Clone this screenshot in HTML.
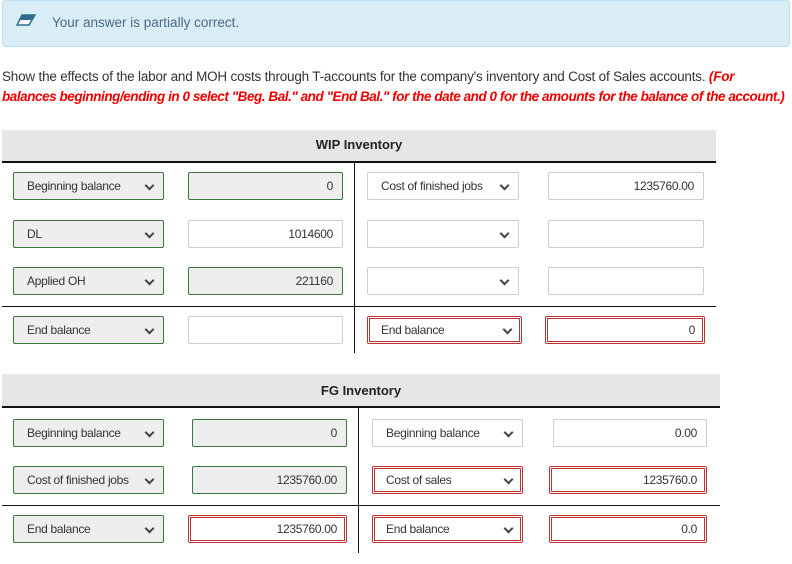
<!DOCTYPE html>
<html><head><meta charset="utf-8"><style>
body{margin:0;width:792px;height:564px;background:#fff;font-family:"Liberation Sans",sans-serif;position:relative;overflow:hidden;color:#333}
.a{position:absolute;box-sizing:border-box}
.banner{left:2px;top:0;width:788px;height:47px;background:#d9edf7;border:1px solid #bcdff1;border-radius:3px}
.hdr{background:#e6e6e6;border-bottom:2px solid #111;font-weight:bold;font-size:13px;text-align:center;color:#222}
.s,.i{height:28px;font-size:12px;line-height:26px;border:1px solid #ccc;background:#fff;border-radius:2px;color:#333;letter-spacing:-0.3px}
.s{padding-left:13px}
.i{text-align:right;padding-right:9px}
.g{border:1px solid #3c763d;background:#eee}
.r{border:3px double #b33;line-height:22px}
.s:after{content:"";position:absolute;right:10px;top:9px;width:5px;height:5px;border-right:2px solid #444;border-bottom:2px solid #444;transform:rotate(45deg)}
.r.s:after{right:8px;top:7px}
.r.s{padding-left:11px}.r.i{padding-right:7px}
.vl{background:#111;width:1px}.hl{background:#111;height:1px}
</style></head><body>
<div class="a banner"></div>
<svg class="a" style="left:16px;top:14px" width="20" height="12" viewBox="0 0 20 12"><path d="M6 1h13l-6 10H1z" fill="#fff" stroke="#2e6b8f" stroke-width="1.5"/><path d="M6 1h13l-3 5H3z" fill="#2e6b8f"/></svg>
<div class="a" style="left:52px;top:15px;font-size:13.5px;color:#4a6a80">Your answer is partially correct.</div>
<div class="a" style="left:2px;top:69px;font-size:13.5px;color:#333;white-space:nowrap;letter-spacing:-0.2px">Show the effects of the labor and MOH costs through T-accounts for the company's inventory and Cost of Sales accounts. <b style="color:#e00;font-style:italic">(For</b></div>
<div class="a" style="left:2px;top:89px;font-size:13.5px;color:#e00;font-weight:bold;font-style:italic;white-space:nowrap;letter-spacing:-0.45px">balances beginning/ending in 0 select "Beg. Bal." and "End Bal." for the date and 0 for the amounts for the balance of the account.)</div>

<div class="a hdr" style="left:2px;top:130px;width:714px;height:33px;line-height:30px">WIP Inventory</div>
<div class="a vl" style="left:354px;top:163px;height:190px"></div>
<div class="a hl" style="left:2px;top:306px;width:714px"></div>

<div class="a s g" style="left:13px;top:172px;width:151px">Beginning balance</div>
<div class="a i g" style="left:188px;top:172px;width:155px">0</div>
<div class="a s" style="left:367px;top:172px;width:152px">Cost of finished jobs</div>
<div class="a i" style="left:548px;top:172px;width:156px">1235760.00</div>

<div class="a s g" style="left:13px;top:220px;width:151px">DL</div>
<div class="a i" style="left:188px;top:220px;width:155px">1014600</div>
<div class="a s" style="left:367px;top:220px;width:152px"></div>
<div class="a i" style="left:548px;top:220px;width:156px"></div>

<div class="a s g" style="left:13px;top:267px;width:151px">Applied OH</div>
<div class="a i g" style="left:188px;top:267px;width:155px">221160</div>
<div class="a s" style="left:367px;top:267px;width:152px"></div>
<div class="a i" style="left:548px;top:267px;width:156px"></div>

<div class="a s g" style="left:13px;top:316px;width:151px">End balance</div>
<div class="a i" style="left:188px;top:316px;width:155px"></div>
<div class="a s r" style="left:367px;top:316px;width:155px">End balance</div>
<div class="a i r" style="left:545px;top:316px;width:160px">0</div>

<div class="a hdr" style="left:2px;top:374px;width:718px;height:34px;line-height:34px">FG Inventory</div>
<div class="a vl" style="left:358px;top:408px;height:145px"></div>
<div class="a hl" style="left:2px;top:505px;width:718px"></div>

<div class="a s g" style="left:13px;top:419px;width:151px">Beginning balance</div>
<div class="a i g" style="left:192px;top:419px;width:155px">0</div>
<div class="a s" style="left:372px;top:419px;width:151px">Beginning balance</div>
<div class="a i" style="left:553px;top:419px;width:154px">0.00</div>

<div class="a s g" style="left:13px;top:466px;width:151px">Cost of finished jobs</div>
<div class="a i g" style="left:192px;top:466px;width:155px">1235760.00</div>
<div class="a s r" style="left:372px;top:466px;width:151px">Cost of sales</div>
<div class="a i r" style="left:549px;top:466px;width:158px">1235760.0</div>

<div class="a s g" style="left:13px;top:515px;width:151px">End balance</div>
<div class="a i r" style="left:188px;top:515px;width:159px">1235760.00</div>
<div class="a s r" style="left:372px;top:515px;width:151px">End balance</div>
<div class="a i r" style="left:549px;top:515px;width:158px">0.0</div>
</body></html>
